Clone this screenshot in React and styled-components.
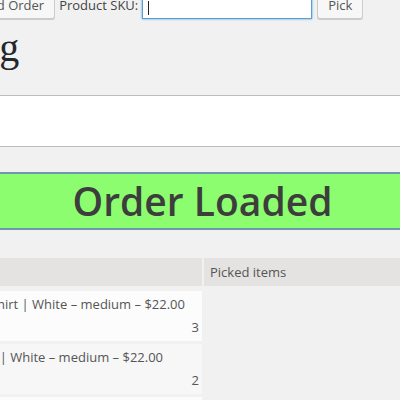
import styled, { createGlobalStyle } from "styled-components";

const GlobalStyle = createGlobalStyle`
  html, body {
    margin: 0;
    padding: 0;
    background: #f1f1f1;
    overflow: hidden;
  }
  body {
    font-family: "Open Sans", "Liberation Sans", sans-serif;
    font-size: 13px;
    color: #444;
  }
`;

const Page = styled.div`
  width: 625px;
  margin: -9px 0 0 -110px;
`;

const Toolbar = styled.div`
  display: flex;
  align-items: center;
  height: 28px;
  padding-left: 74px;
`;

const Button = styled.button`
  height: 28px;
  padding: 0 10px;
  margin-left: ${(p) => p.$gap || 0}px;
  border: 1px solid #ccc;
  border-radius: 3px;
  background: #f7f7f7;
  box-shadow: 0 1px 0 #ccc;
  font-family: "Open Sans", "Liberation Sans", sans-serif;
  font-size: 13px;
  line-height: 26px;
  color: #555;
`;

const Label = styled.label`
  margin-left: 4px;
  color: #444;
`;

const SkuField = styled.div`
  box-sizing: border-box;
  width: 170px;
  height: 28px;
  margin-left: 4px;
  padding: 0 5px 3px;
  display: flex;
  align-items: flex-end;
  background: #fff;
  border: 1px solid #5b9dd9;
  box-shadow: 0 0 2px rgba(30, 140, 190, 0.8);
`;

const Caret = styled.span`
  width: 1px;
  height: 14px;
  background: #222;
`;

const Heading = styled.h1`
  margin: 5px 0 0;
  padding-left: 7px;
  font-family: "Liberation Serif", serif;
  font-size: 40px;
  font-weight: 400;
  line-height: 48px;
  color: #23282d;
`;

const ScanBox = styled.div`
  height: 50px;
  margin-top: 23px;
  background: #fff;
  border-top: 1px solid #bdbdbd;
  border-bottom: 1px solid #bdbdbd;
`;

const Banner = styled.div`
  margin-top: 25px;
  height: 54px;
  background: #8cfd6e;
  border-top: 2px solid #6f98b0;
  border-bottom: 2px solid #6f98b0;
  text-align: center;
  font-size: 39px;
  font-weight: 600;
  line-height: 54px;
  color: #3d3d3d;
`;

const Lists = styled.div`
  display: grid;
  grid-template-columns: 312px 1fr;
  column-gap: 2px;
  margin-top: 28px;
`;

const Column = styled.div`
  display: flex;
  flex-direction: column;
  gap: 3px;
`;

const HeadCell = styled.div`
  height: 28px;
  margin-bottom: 2px;
  padding-left: 6px;
  background: #e5e3e1;
  line-height: 28px;
  color: #555;
`;

const ItemRow = styled.div`
  height: 50px;
  box-sizing: border-box;
  padding: 2px 3px 0 11px;
  background: ${(p) => (p.$odd ? "#fcfcfc" : "#f7f7f7")};
  line-height: 23px;
  color: #555;
  white-space: nowrap;
`;

const Qty = styled.div`
  text-align: right;
`;

const items = [
  { name: "Happy Ninja T-Shirt | White – medium – $22.00", qty: 3 },
  { name: "Happy Ninja Tie | White – medium – $22.00", qty: 2 },
  { name: "Happy Ninja Hoodie | White – medium – $22.00", qty: 1 },
];

export default function App() {
  return (
    <>
      <GlobalStyle />
      <Page>
        <Toolbar>
          <Button>Load Order</Button>
          <Label>Product SKU:</Label>
          <SkuField>
            <Caret />
          </SkuField>
          <Button $gap={5}>Pick</Button>
        </Toolbar>
        <Heading>Picking</Heading>
        <ScanBox />
        <Banner>Order Loaded</Banner>
        <Lists>
          <Column>
            <HeadCell>Items</HeadCell>
            {items.map((item, i) => (
              <ItemRow key={i} $odd={i % 2 === 0}>
                <div>{item.name}</div>
                <Qty>{item.qty}</Qty>
              </ItemRow>
            ))}
          </Column>
          <Column>
            <HeadCell>Picked items</HeadCell>
          </Column>
        </Lists>
      </Page>
    </>
  );
}
